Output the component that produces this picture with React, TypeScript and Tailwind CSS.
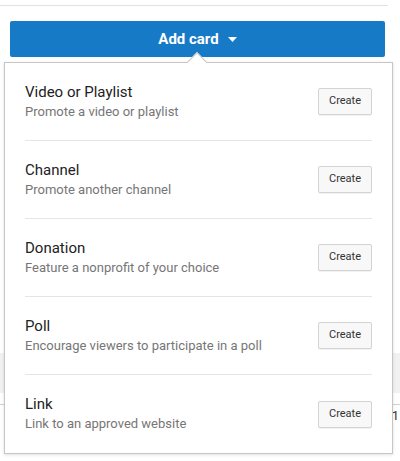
// "Add card" dropdown for the cards editor: a blue trigger button with
// a white popover listing the card types, each with its own Create button.

const CARD_TYPES = [
  { title: "Video or Playlist", hint: "Promote a video or playlist" },
  { title: "Channel", hint: "Promote another channel" },
  { title: "Donation", hint: "Feature a nonprofit of your choice" },
  { title: "Poll", hint: "Encourage viewers to participate in a poll" },
  { title: "Link", hint: "Link to an approved website" },
];

function CardTypeRow({
  title,
  hint,
  last,
}: {
  title: string;
  hint: string;
  last: boolean;
}) {
  return (
    <div
      className={`mx-[20px] h-[78px] flex items-center justify-between ${
        last ? "" : "border-b border-[#e5e5e5]"
      }`}
    >
      <div className="flex flex-col pb-[1px]">
        <p className="text-[15px] leading-[20px] text-[#222]">{title}</p>
        <p className="text-[13px] leading-[19px] text-[#767676]">{hint}</p>
      </div>
      <button
        type="button"
        className="w-[54px] h-[27px] rounded-[2px] border border-[#d3d3d3] bg-[#f8f8f8] text-[11px] text-[#333] shadow-[0_1px_0_rgba(0,0,0,0.05)]"
      >
        Create
      </button>
    </div>
  );
}

export default function App() {
  return (
    <div
      className="relative w-[400px] h-[461px] overflow-hidden bg-white"
      style={{ fontFamily: "Roboto, 'Liberation Sans', sans-serif" }}
    >
      {/* page behind the popover */}
      <div className="w-[388px] mt-[5px] border-t border-[#e2e2e2]" />
      <button
        type="button"
        className="ml-[10px] mt-[15px] w-[375px] h-[36px] rounded-[2px] bg-[#167ac6] flex items-center justify-center gap-[9px] text-white text-[15px] font-bold"
      >
        <span>Add card</span>
        <svg width="9" height="5" viewBox="0 0 9 5" className="mt-[1px]">
          <path d="M0 0h9L4.5 5z" fill="#fff" />
        </svg>
      </button>
      <div className="mt-[296px] h-[40px] w-full bg-[#f1f1f1]" />
      <div className="mt-[11px] border-t border-[#d0d0d0]" />
      <div className="flex justify-end pr-[1px] pt-[1px] text-[13px] text-[#333]">
        1
      </div>

      {/* popover */}
      <div className="absolute left-[4px] top-[62px] w-[389px] border border-[#c6c6c6] bg-white shadow-[0_1px_3px_rgba(0,0,0,0.12)]">
        <div className="absolute left-[185px] top-[-8px] w-[14px] h-[14px] rotate-45 border-l border-t border-[#c6c6c6] bg-white" />
        <div className="relative">
          {CARD_TYPES.map((c, i) => (
            <CardTypeRow
              key={c.title}
              title={c.title}
              hint={c.hint}
              last={i === CARD_TYPES.length - 1}
            />
          ))}
        </div>
      </div>
    </div>
  );
}
